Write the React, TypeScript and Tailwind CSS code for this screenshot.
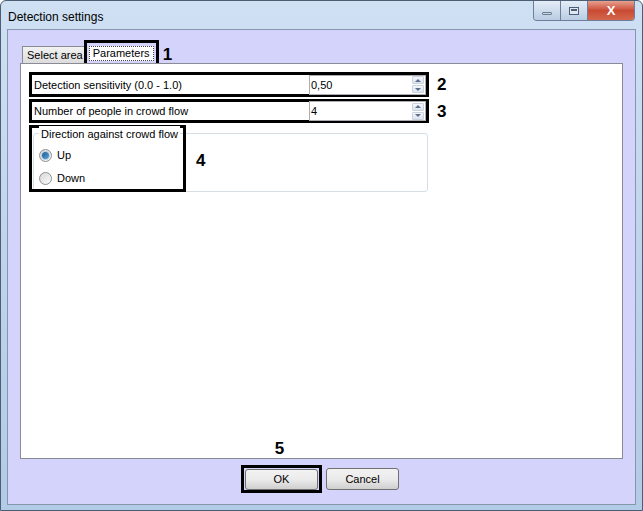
import React, { useState } from 'react';

const font = { fontFamily: '"Liberation Sans", Arial, sans-serif' };

function Spin({ value }: { value: string }) {
  return (
    <div className="flex h-[20px] w-[117px] border border-[#abadb3] bg-white">
      <span className="flex-1 pl-[1px] text-[11px] leading-[18px] text-black">{value}</span>
      <div className="flex w-[13px] flex-col justify-center gap-[1px] pr-[1px]">
        <div className="flex h-[8px] items-center justify-center rounded-[1px] border border-[#c9d2de] bg-gradient-to-b from-[#f4f7fb] to-[#dce4ee]">
          <div className="h-0 w-0 border-x-[3px] border-b-[3px] border-x-transparent border-b-[#5b6f8c]" />
        </div>
        <div className="flex h-[8px] items-center justify-center rounded-[1px] border border-[#c9d2de] bg-gradient-to-b from-[#f4f7fb] to-[#dce4ee]">
          <div className="h-0 w-0 border-x-[3px] border-t-[3px] border-x-transparent border-t-[#5b6f8c]" />
        </div>
      </div>
    </div>
  );
}

function Radio({ checked, label, onClick }: { checked: boolean; label: string; onClick: () => void }) {
  return (
    <div className="flex h-[23px] items-center gap-[5px]" onClick={onClick}>
      <div className="flex h-[13px] w-[13px] items-center justify-center rounded-full border border-[#8f8f8f] bg-gradient-to-br from-[#d8d8d8] to-[#fafafa]">
        {checked && <div className="h-[7px] w-[7px] rounded-full bg-gradient-to-br from-[#1d5c8f] to-[#5aa3da] shadow-[0_0_0_1px_#b8cfe4]" />}
      </div>
      <span className="text-[11px] text-black">{label}</span>
    </div>
  );
}

export default function App() {
  const [dir, setDir] = useState('up');

  return (
    <div style={font} className="flex h-[511px] w-[643px] flex-col overflow-hidden rounded-t-[6px] border border-[#4d5d73] bg-gradient-to-b from-[#cfe0f3] via-[#bfd4ec] to-[#b2cbe6]">
      {/* Title bar */}
      <div className="flex h-[28px] items-start justify-between pl-[7px]">
        <span className="mt-[7px] text-[12px] text-black">Detection settings</span>
        <div className="mr-[7px] flex h-[20px] overflow-hidden rounded-b-[4px] border border-t-0 border-[#6d7f98]">
          <div className="flex w-[27px] items-center justify-center border-r border-[#6d7f98] bg-gradient-to-b from-[#e4edf7] to-[#b9cce3]">
            <div className="mt-[6px] h-[3px] w-[10px] rounded-[1px] border border-[#6c7c93] bg-[#c9d5e5]" />
          </div>
          <div className="flex w-[27px] items-center justify-center border-r border-[#6d7f98] bg-gradient-to-b from-[#e4edf7] to-[#b9cce3]">
            <div className="h-[8px] w-[10px] border border-[#4f5e74] bg-[#dfe7f2] p-[1px]">
              <div className="h-[2px] w-full border border-[#4f5e74]" />
            </div>
          </div>
          <div className="flex w-[46px] items-center justify-center bg-gradient-to-b from-[#e6a08f] via-[#c94a33] to-[#d5674c] text-[13px] font-bold text-white">
            X
          </div>
        </div>
      </div>

      {/* Client area */}
      <div className="mx-[6px] mb-[5px] flex flex-1 flex-col border border-[#8596ad] bg-[#d3d3fb]">
        {/* Tabs */}
        <div className="ml-[14px] mt-[10px] flex h-[23px] items-end">
          <div className="flex h-[17px] items-center border border-b-0 border-[#898c95] bg-gradient-to-b from-[#f2f2f2] to-[#dcdcdc] pl-[4px] pr-[3px] text-[11px] text-black">
            Select area
          </div>
          <div className="relative ml-[-3px] flex h-[23px] w-[75px] items-center justify-center border-[3px] border-b-0 border-black bg-[#d3d3fb]">
            <div className="flex h-[15px] w-[65px] items-center justify-center border border-dotted border-[#444] bg-white text-[11px] text-black">
              Parameters
            </div>
            <span className="absolute left-[76px] top-[-1px] text-[17px] font-bold text-black">1</span>
          </div>
        </div>

        {/* Panel */}
        <div className="mx-[12px] flex h-[396px] flex-col border border-[#898c95] bg-white px-[8px] pt-[8px]">
          <div className="flex items-center">
            <div className="flex h-[25px] w-[400px] items-center justify-between border-[3px] border-black pl-[2px]">
              <span className="text-[11px] text-black">Detection sensitivity (0.0 - 1.0)</span>
              <Spin value="0,50" />
            </div>
            <span className="ml-[8px] text-[17px] font-bold text-black">2</span>
          </div>
          <div className="mt-[1px] flex items-center">
            <div className="flex h-[24px] w-[400px] items-center justify-between border-[3px] border-black pl-[2px]">
              <span className="text-[11px] text-black">Number of people in crowd flow</span>
              <Spin value="4" />
            </div>
            <span className="ml-[8px] text-[17px] font-bold text-black">3</span>
          </div>

          <div className="relative ml-[4px] mt-[9px] h-[59px] w-[395px] rounded-[3px] border border-[#d5dfe5]">
            <div className="absolute left-[-5px] top-[-9px] h-[67px] w-[157px] border-[3px] border-black" />
            <div className="absolute left-[5px] top-[-8px] bg-white px-[2px] text-[11px] text-black">
              Direction against crowd flow
            </div>
            <div className="absolute left-[162px] top-[14px] text-[17px] font-bold text-black">4</div>
            <div className="flex flex-col pl-[5px] pt-[10px]">
              <Radio checked={dir === 'up'} label="Up" onClick={() => setDir('up')} />
              <Radio checked={dir === 'down'} label="Down" onClick={() => setDir('down')} />
            </div>
          </div>

          <div className="flex-1" />
          <div className="flex justify-center pb-[1px]">
            <span className="ml-[-84px] text-[17px] font-bold leading-[17px] text-black">5</span>
          </div>
        </div>

        {/* Buttons */}
        <div className="ml-[233px] mt-[6px] flex items-center gap-[4px]">
          <div className="flex h-[28px] w-[81px] items-center justify-center border-[3px] border-black">
            <button className="h-[21px] w-[73px] rounded-[3px] border border-[#707070] bg-gradient-to-b from-[#f2f2f2] via-[#ebebeb] to-[#cfcfcf] text-[11px] text-black">
              OK
            </button>
          </div>
          <button className="h-[22px] w-[73px] rounded-[3px] border border-[#707070] bg-gradient-to-b from-[#f2f2f2] via-[#ebebeb] to-[#cfcfcf] text-[11px] text-black">
            Cancel
          </button>
        </div>
      </div>
    </div>
  );
}
